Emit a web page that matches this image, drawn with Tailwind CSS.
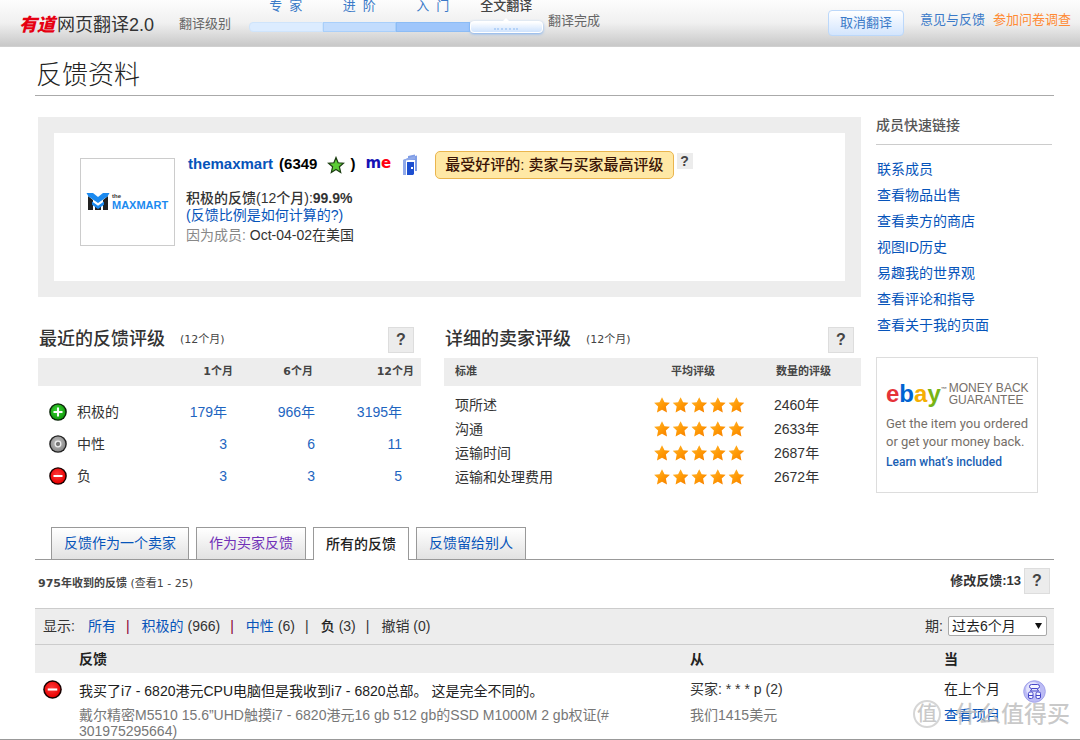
<!DOCTYPE html>
<html lang="zh-CN">
<head>
<meta charset="utf-8">
<title>反馈资料</title>
<script src="https://cdn.jsdelivr.net/npm/@tailwindcss/browser@4"></script>
</head>
<body class="bg-white font-['Liberation_Sans','Noto_Sans_CJK_SC',sans-serif] text-sm text-[#333] overflow-hidden">

<!-- Shared icons -->
<svg width="0" height="0" class="absolute" aria-hidden="true">
  <defs>
    <radialGradient id="gGreen" cx="45%" cy="40%" r="60%"><stop offset="0" stop-color="#3fd83a"/><stop offset="1" stop-color="#129a0c"/></radialGradient>
    <radialGradient id="gGray" cx="45%" cy="40%" r="60%"><stop offset="0" stop-color="#c4c4c4"/><stop offset="1" stop-color="#8a8a8a"/></radialGradient>
    <radialGradient id="gRed" cx="45%" cy="40%" r="60%"><stop offset="0" stop-color="#ff3b3b"/><stop offset="1" stop-color="#e80000"/></radialGradient>
    <linearGradient id="gStar" x1="0" y1="0" x2="1" y2="1"><stop offset="0" stop-color="#ffb93a"/><stop offset=".5" stop-color="#ff9a05"/><stop offset="1" stop-color="#f57c00"/></linearGradient>
    <symbol id="star" viewBox="0 0 16 16"><polygon points="8,0.3 10.5,5.200 15.900,5.800 11.900,9.600 13,15.500 8,12.800 3,15.500 4.100,9.600 0.100,5.800 5.500,5.200" fill="url(#gStar)"/></symbol>
    <symbol id="stars" viewBox="0 0 92 16">
      <use href="#star" x="0" y="0" width="16" height="16"/><use href="#star" x="18.6" y="0" width="16" height="16"/><use href="#star" x="37.2" y="0" width="16" height="16"/><use href="#star" x="55.8" y="0" width="16" height="16"/><use href="#star" x="74.4" y="0" width="16" height="16"/>
    </symbol>
    <symbol id="minus" viewBox="0 0 18 18"><circle cx="9" cy="9" r="8.8" fill="#160000"/><circle cx="9" cy="9" r="7.4" fill="url(#gRed)"/><rect x="4.5" y="8" width="9" height="2" fill="#fff"/></symbol>
  </defs>
</svg>

<header class="flex h-[47px] items-start bg-linear-to-b from-[#fdfdfd] via-[#f0f0f0] to-[#c8c8c8] border-b border-[#d0d0d0] pl-[19px] pr-[9px]">
  <div class="flex h-[50px] w-40 items-center gap-[2px] whitespace-nowrap">
    <span class="text-lg font-black italic text-[#e60012]">有道</span>
    <span class="text-lg text-[#333]">网页翻译2.0</span>
  </div>
  <span class="mt-3 w-[70px] text-[13px] leading-6 text-[#666]">翻译级别</span>
  <div class="w-[294px] text-center text-[13px] leading-4 text-[#3b7ac8]">
    <div class="grid h-[19px] grid-cols-4 items-start whitespace-pre">
      <span class="-mt-[2px]">专  家</span><span class="-mt-[2px]">进  阶</span><span class="-mt-[2px]">入  门</span><span class="-mt-[2px] font-medium text-[#444]">全文翻译</span>
    </div>
    <div class="grid h-[16px] grid-cols-4 items-center">
      <div class="h-[10px] rounded-l border border-[#cfe4fb] bg-[#dcecff]"></div>
      <div class="h-[10px] border border-[#a9cffa] bg-[#c2dcfd]"></div>
      <div class="h-[10px] border border-[#8cbcf5] bg-[#9fc6fb]"></div>
      <div class="relative flex h-3 items-center justify-center rounded border border-white bg-linear-to-b from-white to-[#cfe3fd] shadow-[0_1px_3px_#7fb2f5]">
        <svg class="absolute -top-1" width="10" height="5" viewBox="0 0 10 5"><path d="M0 5 5 0 10 5z" fill="#fff"/></svg>
        <div class="mt-1 w-6 border-t-2 border-dotted border-[#b4d2f8]"></div>
      </div>
    </div>
  </div>
  <span class="mt-[9px] ml-[5px] text-[13px] leading-6 text-[#666]">翻译完成</span>
  <button class="mt-[10px] ml-auto h-[26px] w-[76px] rounded border border-[#bcd8fa] bg-linear-to-b from-white to-[#d3e5fd] text-[13px] text-[#3b7ac8]">取消翻译</button>
  <a href="#" class="mt-2 ml-4 text-[13px] leading-6 text-[#3b7ac8]">意见与反馈</a>
  <a href="#" class="mt-2 ml-2 text-[13px] leading-6 text-[#ff8a33]">参加问卷调查</a>
</header>

<main class="flex h-[693px] flex-col border-b border-[#999] pl-[35px] pr-[26px]">
  <h1 class="h-[49px] border-b border-[#aaa] pt-2 pl-[1px] text-[26px] leading-10 font-light text-[#222]">反馈资料</h1>

  <div class="flex">
    <div class="ml-[3px] flex-1 pt-[21px]">
      <!-- Member card -->
      <section class="flex h-[180px] border-16 border-[#ededed] pt-[16px] pl-[26px]">
        <div class="mt-[9px] flex h-[88px] w-[95px] shrink-0 items-center justify-center border border-[#ccc]">
          <svg width="84" height="20" viewBox="0 0 84 20">
            <path d="M2 4v14h5V8zM22 4v14h-5V8zM9 14l3 2 3-2v4H9z" fill="#222"/>
            <path d="M0.500 1h6.500l5 4 5-4h6.500l-2 3.500-9.500 6.500L2.500 4.500z" fill="#1b8af0"/>
            <path d="M6 9.500l6 4.300 6-4.300v3.300l-6 4.200-6-4.200z" fill="#1b8af0"/>
            <text x="26" y="6" font-size="6" font-weight="bold" fill="#333" font-family="Liberation Sans">the</text>
            <text x="26" y="17" font-size="11" font-weight="bold" fill="#1b8af0" font-family="Liberation Sans">MAXMART</text>
          </svg>
        </div>
        <div class="ml-[11px] flex-1 pt-[2px]">
          <div class="flex h-7 items-center pl-[2px] text-[15px] font-bold text-black">
            <a href="#" class="pb-[2px] text-[#0654ba]">themaxmart</a><span class="ml-[6px] pb-[2px]">(6349</span>
            <svg class="ml-[10px]" width="18" height="18" viewBox="0 0 17 18"><path d="M8.500 1.500 10.600 6.800 16 7.200 11.900 10.800 13.200 16.500 8.500 13.500 3.800 16.500 5.100 10.800 1 7.200 6.400 6.800z" fill="#5ccc36" stroke="#1c3d12" stroke-width="1.200"/></svg>
            <span class="ml-[5px] pb-[2px]">)</span>
            <span class="ml-[10px] pb-[2px] font-['DejaVu_Sans'] text-[15px] text-[#1512b5]">m<span class="text-[#f01]">e</span></span>
            <svg class="ml-[11px]" width="16" height="22" viewBox="0 0 16 22"><path d="M1 21V6l5-2v-2l7-1.500V2l2-.5V17h-2V6H4v15z" fill="#7f9de6"/><path d="M1 6 13 2v3L4 6.500V21H1z" fill="#91aaea"/><path d="M5 8h7v12l-1 1H5z" fill="#1d4fd0"/><path d="M9 13h2v2H9z" fill="#fff"/></svg>
            <span class="ml-[17px] flex h-7 items-center rounded-[5px] border border-[#eab54e] bg-[#ffe8a5] px-[9px] font-medium whitespace-nowrap text-[#3a1405]">最受好评的: 卖家与买家最高评级</span>
            <button aria-label="帮助" class="mt-[2px] ml-[3px] h-4 w-4 self-start bg-[#ececec] text-sm leading-4 text-[#444]">?</button>
          </div>
          <div class="mt-[11px] text-sm leading-[17px] font-medium text-[#333]">积极的反馈(12个月):<b>99.9%</b></div>
          <div class="text-sm leading-[17px]"><a href="#" class="text-[#0654ba]">(反馈比例是如何计算的?)</a></div>
          <div class="mt-[1px] text-sm leading-5"><span class="text-[#888]">因为成员:</span> Oct-04-02在美国</div>
        </div>
      </section>

      <div class="mt-[29px] flex gap-[23px]">
        <!-- Recent ratings -->
        <section class="w-[383px]">
          <div class="flex h-8 items-center pr-[7px]">
            <h2 class="ml-[1px] mb-[6px] text-lg font-medium text-[#333]">最近的反馈评级</h2>
            <span class="ml-[15px] mb-1 font-['DejaVu_Sans','Noto_Sans_CJK_SC'] text-[11px] text-[#444]">(12个月)</span>
            <button aria-label="帮助" class="ml-auto mb-[5px] h-[26px] w-[26px] border border-[#ddd] bg-[#ececec] text-base font-bold text-[#444]">?</button>
          </div>
          <table class="w-full table-fixed text-right">
            <colgroup><col class="w-[102px]"><col class="w-[93px]"><col class="w-[88px]"><col></colgroup>
            <thead class="bg-[#ededed] font-['DejaVu_Sans','Noto_Sans_CJK_SC'] text-[11px] text-[#444]">
              <tr class="h-7"><th></th><th>1个月</th><th class="pr-2">6个月</th><th class="pr-[7px]">12个月</th></tr>
            </thead>
            <tbody class="text-[#0654ba] [&_a]:opacity-90">
              <tr class="h-[10px]"></tr>
              <tr class="h-8"><td><div class="flex items-center gap-[10px] pl-[11px] text-[#333]"><svg class="shrink-0" width="18" height="18" viewBox="0 0 18 18"><circle cx="9" cy="9" r="8.800" fill="#0a2408"/><circle cx="9" cy="9" r="7.400" fill="url(#gGreen)"/><path d="M8 4.500h2V8h3.500v2H10v3.500H8V10H4.500V8H8z" fill="#fff"/></svg>积极的</div></td><td class="pr-[6px]"><a href="#">179年</a></td><td class="pr-[6px]"><a href="#">966年</a></td><td class="pr-[19px]"><a href="#">3195年</a></td></tr>
              <tr class="h-8"><td><div class="flex items-center gap-[10px] pl-[11px] text-[#333]"><svg class="shrink-0" width="18" height="18" viewBox="0 0 18 18"><circle cx="9" cy="9" r="8.800" fill="#222"/><circle cx="9" cy="9" r="7.400" fill="url(#gGray)"/><circle cx="9" cy="9" r="2.800" fill="#777" stroke="#eee" stroke-width="1.300"/></svg>中性</div></td><td class="pr-[6px]"><a href="#">3</a></td><td class="pr-[6px]"><a href="#">6</a></td><td class="pr-[19px]"><a href="#">11</a></td></tr>
              <tr class="h-8"><td><div class="flex items-center gap-[10px] pl-[11px] text-[#333]"><svg class="shrink-0" width="18" height="18"><use href="#minus"/></svg>负</div></td><td class="pr-[6px]"><a href="#">3</a></td><td class="pr-[6px]"><a href="#">3</a></td><td class="pr-[19px]"><a href="#">5</a></td></tr>
            </tbody>
          </table>
        </section>

        <!-- Detailed seller ratings -->
        <section class="flex-1">
          <div class="flex h-8 items-center pr-[7px]">
            <h2 class="ml-[1px] mb-[6px] text-lg font-medium text-[#333]">详细的卖家评级</h2>
            <span class="ml-[15px] mb-1 font-['DejaVu_Sans','Noto_Sans_CJK_SC'] text-[11px] text-[#444]">(12个月)</span>
            <button aria-label="帮助" class="ml-auto mb-[5px] h-[26px] w-[26px] border border-[#ddd] bg-[#ececec] text-base font-bold text-[#444]">?</button>
          </div>
          <table class="w-full table-fixed text-left">
            <colgroup><col class="w-[210px]"><col class="w-[120px]"><col></colgroup>
            <thead class="bg-[#ededed] text-[11px] text-[#444]">
              <tr class="h-7"><th class="pl-[11px]">标准</th><th class="pl-[17px]">平均评级</th><th class="pl-[2px]">数量的评级</th></tr>
            </thead>
            <tbody>
              <tr class="h-[7px]"></tr>
              <tr class="h-6"><td class="pl-[11px]">项所述</td><td><svg width="92" height="16"><use href="#stars"/></svg></td><td>2460年</td></tr>
              <tr class="h-6"><td class="pl-[11px]">沟通</td><td><svg width="92" height="16"><use href="#stars"/></svg></td><td>2633年</td></tr>
              <tr class="h-6"><td class="pl-[11px]">运输时间</td><td><svg width="92" height="16"><use href="#stars"/></svg></td><td>2687年</td></tr>
              <tr class="h-6"><td class="pl-[11px]">运输和处理费用</td><td><svg width="92" height="16"><use href="#stars"/></svg></td><td>2672年</td></tr>
            </tbody>
          </table>
        </section>
      </div>
    </div>

    <aside class="ml-[15px] mr-[2px] w-44 pt-[14px]">
      <h2 class="h-[35px] border-b border-[#ccc] text-sm leading-[30px] font-medium text-[#555]">成员快速链接</h2>
      <nav class="mt-3 flex flex-col gap-[2px] pl-[1px] leading-6 text-[#0654ba]">
        <a href="#">联系成员</a><a href="#">查看物品出售</a><a href="#">查看卖方的商店</a><a href="#">视图ID历史</a><a href="#">易趣我的世界观</a><a href="#">查看评论和指导</a><a href="#">查看关于我的页面</a>
      </nav>
      <div class="mt-5 h-[136px] w-[162px] border border-[#ddd] pt-5 pl-[9px] whitespace-nowrap text-[#766f69]">
        <div class="flex h-8 items-center gap-[2px]">
          <span class="flex text-2xl leading-8 font-bold"><span class="text-[#e53238]">e</span><span class="text-[#0064d2]">b</span><span class="text-[#f5af02]">a</span><span class="text-[#78b414]">y</span><span class="text-[6px] leading-[22px]">™</span></span>
          <span class="text-[12px] leading-3">MONEY BACK<br>GUARANTEE</span>
        </div>
        <p class="mt-[5px] font-['Roboto'] text-[13px] leading-[18px]">Get the item you ordered<br>or get your money back.</p>
        <a href="#" class="font-['Roboto'] text-[12px] leading-5 font-medium text-[#1a5fb4]">Learn what’s included</a>
      </div>
    </aside>
  </div>

  <!-- Tabs -->
  <nav class="mt-[34px] flex h-[33px] gap-[7px] border-b border-[#999] pl-4 text-sm text-[#0654ba]">
    <a href="#" class="flex items-center border border-b-0 border-[#999] bg-linear-to-b from-white to-[#e2e2e2] px-3 pb-[2px]">反馈作为一个卖家</a>
    <a href="#" class="flex items-center border border-b-0 border-[#999] bg-linear-to-b from-white to-[#e2e2e2] px-3 pb-[2px] text-[#7030b8]">作为买家反馈</a>
    <a href="#" class="flex h-[33px] items-center border border-b-0 border-[#999] bg-white px-3 font-medium text-[#222]">所有的反馈</a>
    <a href="#" class="flex items-center border border-b-0 border-[#999] bg-linear-to-b from-white to-[#e2e2e2] px-3 pb-[2px]">反馈留给别人</a>
  </nav>

  <div class="flex h-12 items-center pr-1 pl-[3px] text-[#444]">
    <span class="font-['DejaVu_Sans','Noto_Sans_CJK_SC'] text-[11px]"><b>975年收到的反馈</b> (查看1 - 25)</span>
    <b class="ml-auto mb-[6px] text-[13px] text-[#333]">修改反馈:13</b>
    <button aria-label="帮助" class="ml-[3px] mb-[6px] h-[26px] w-[26px] border border-[#ddd] bg-[#ececec] text-base font-bold text-[#444]">?</button>
  </div>

  <div class="flex h-9 shrink-0 items-center border-t border-[#ccc] bg-[#ededed] pr-[7px] pb-[2px] pl-2">
    <span class="mr-[13px]">显示:</span>
    <a href="#" class="text-[#0654ba]">所有</a><span class="mr-3 ml-[10px] text-[#803]">|</span>
    <a href="#" class="mr-1 text-[#0654ba]">积极的</a>(966)<span class="mr-3 ml-[10px] text-[#803]">|</span>
    <a href="#" class="mr-1 text-[#0654ba]">中性</a>(6)<span class="mr-3 ml-[10px] text-[#333]">|</span>
    <span class="mr-1 font-medium text-[#222]">负</span>(3)<span class="mr-3 ml-[10px] text-[#333]">|</span>
    <span>撤销 (0)</span>
    <label for="period" class="mr-[5px] ml-auto">期:</label>
    <div class="relative">
      <select id="period" class="block h-5 w-[99px] appearance-none rounded-xs border border-[#a9a9a9] bg-white pl-[3px] text-sm leading-[18px] text-[#222]"><option>过去6个月</option></select>
      <svg class="pointer-events-none absolute top-[7px] right-[5px]" width="7" height="6" viewBox="0 0 7 6"><path d="M0 0h7L3.500 6z" fill="#111"/></svg>
    </div>
  </div>

  <table class="w-full table-fixed text-left">
    <colgroup><col class="w-[44px]"><col class="w-[611px]"><col class="w-[254px]"><col></colgroup>
    <thead class="border-t border-[#ccc] bg-[#ededed] font-medium text-[#222]">
      <tr class="h-7"><th></th><th>反馈</th><th>从</th><th>当</th></tr>
    </thead>
    <tbody class="align-top whitespace-nowrap">
      <tr>
        <td class="pt-[7px] pl-2"><svg width="19" height="19"><use href="#minus"/></svg></td>
        <td class="pt-2"><div class="leading-5 text-[#222]">我买了i7 - 6820港元CPU电脑但是我收到i7 - 6820总部。 这是完全不同的。</div><div class="mt-[6px] leading-4 text-[#777]">戴尔精密M5510 15.6”UHD触摸i7 - 6820港元16 gb 512 gb的SSD M1000M 2 gb权证(#<br>301975295664)</div></td>
        <td class="pt-[6px]"><div class="leading-5">买家: * * * p (2)</div><div class="mt-[6px] leading-5 text-[#777]">我们1415美元</div></td>
        <td class="pt-[6px]"><div class="flex"><div><div class="leading-5 text-[#222]">在上个月</div><a href="#" class="mt-[6px] block leading-5 text-[#0654ba]">查看项目</a></div>
          <svg class="mt-[1px] ml-[23px]" width="23" height="23" viewBox="0 0 23 23"><circle cx="11.500" cy="11.500" r="10.800" fill="#bcbcf5" stroke="#a3a3ea"/><circle cx="10" cy="9" r="7" fill="#e3e3fd"/><g fill="#f4f4ff" stroke="#4646c8" stroke-width="1"><rect x="6.500" y="4.500" width="10" height="4" rx="2"/><path d="M9 8.500 7.500 11h8L14 8.500" fill="none"/><rect x="5.500" y="12" width="4.500" height="6.500" rx="1.500"/><rect x="13" y="12" width="4.500" height="6.500" rx="1.500"/><path d="M5.500 15.500H10M13 15.500h4.500"/></g></svg></div></td>
      </tr>
    </tbody>
  </table>
</main>

<!-- Watermark -->
<div class="pointer-events-none absolute top-[698px] left-[913px] flex h-8 items-center gap-[14px] whitespace-nowrap text-[#bbb]/80">
  <span class="flex h-7 w-7 items-center justify-center rounded-full border-2 border-[#bbb]/60 text-xl font-medium">值</span>
  <span class="text-[23px] font-medium">什么值得买</span>
</div>
</body>
</html>
